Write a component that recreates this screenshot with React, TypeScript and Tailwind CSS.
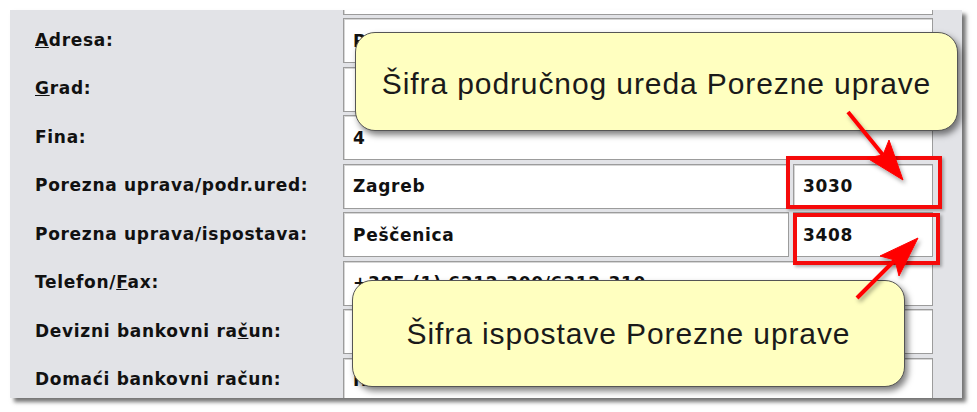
import React from 'react';

const labelFont = { fontFamily: '"DejaVu Sans", Verdana, sans-serif' };

interface Row {
  label: React.ReactNode;
  value?: string;
  code?: string;
}

const rows: Row[] = [
  { label: '', value: '' },
  { label: <><u>A</u>dresa:</>, value: 'Prilaz Gjure Deželića 12' },
  { label: <><u>G</u>rad:</>, value: '' },
  { label: 'Fina:', value: '4' },
  { label: 'Porezna uprava/podr.ured:', value: 'Zagreb', code: '3030' },
  { label: 'Porezna uprava/ispostava:', value: 'Peščenica', code: '3408' },
  { label: <>Telefon/<u>F</u>ax:</>, value: '+385 (1) 6312-300/6312-310' },
  { label: <>Devizni bankovni ra<u>č</u>un:</>, value: '' },
  { label: 'Domaći bankovni račun:', value: 'HR1723600001101234567' },
];

const Field = ({ text, w }: { text?: string; w: string }) => (
  <div className={`${w} h-full bg-white border border-[#9c9c9c] shadow-[inset_1px_1px_0_#d6d6d6] flex items-center pl-[9px] pt-[2px] text-[17px] font-bold tracking-[0.7px] text-[#111] whitespace-nowrap overflow-hidden`}>
    {text}
  </div>
);

const App: React.FC = () => {
  return (
    <div className="relative w-[977px] h-[412px] bg-white overflow-hidden pl-[10px] pt-[10px]" style={labelFont}>
      {/* Form panel */}
      <div className="w-[952px] h-[388px] bg-[#e2e3e7] overflow-hidden shadow-[4px_4px_4px_rgba(0,0,0,0.55)]">
        <div className="flex flex-col gap-[3.5px] -mt-[40.5px]">
          {rows.map((r, i) => (
            <div key={i} className="flex items-center h-[45px]">
              <div className="w-[333px] pl-[25px] text-[17px] font-bold tracking-[0.7px] text-[#111] whitespace-nowrap">
                {r.label}
              </div>
              {r.code ? (
                <div className="flex gap-[4px] h-full w-[590px]">
                  <Field text={r.value} w="w-[446px]" />
                  <Field text={r.code} w="w-[140px]" />
                </div>
              ) : (
                <Field text={r.value} w="w-[590px]" />
              )}
            </div>
          ))}
        </div>
      </div>

      {/* Red highlight boxes */}
      <div className="absolute left-[786px] top-[156px] w-[156px] h-[53px] border-4 border-[#f50a0a] shadow-[2px_2px_3px_rgba(0,0,0,0.3)]" />
      <div className="absolute left-[793px] top-[213px] w-[147px] h-[52px] border-4 border-[#f50a0a] shadow-[2px_2px_3px_rgba(0,0,0,0.3)]" />

      {/* Callouts */}
      <div
        className="absolute left-[355px] top-[32px] w-[603px] h-[99px] rounded-[20px] bg-[#ffffc0] border-[1.5px] border-[#555] shadow-[3px_4px_6px_rgba(0,0,0,0.5)] flex items-center justify-center pt-[4px] text-[30px] tracking-[0.9px] text-[#1a1a1a]"
        style={{ fontFamily: '"Liberation Sans", Arial, sans-serif' }}
      >
        Šifra područnog ureda Porezne uprave
      </div>
      <div
        className="absolute left-[352px] top-[280px] w-[553px] h-[107px] rounded-[20px] bg-[#ffffc0] border-[1.5px] border-[#555] shadow-[3px_4px_6px_rgba(0,0,0,0.5)] flex items-center justify-center text-[30px] tracking-[0.9px] text-[#1a1a1a]"
        style={{ fontFamily: '"Liberation Sans", Arial, sans-serif' }}
      >
        Šifra ispostave Porezne uprave
      </div>

      {/* Arrows */}
      <svg className="absolute left-0 top-0 pointer-events-none" width="977" height="412" viewBox="0 0 977 412">
        <defs>
          <filter id="sh" x="-20%" y="-20%" width="140%" height="140%">
            <feDropShadow dx="2" dy="3" stdDeviation="2" floodColor="#000" floodOpacity="0.35" />
          </filter>
        </defs>
        <g filter="url(#sh)" fill="#ff0000" stroke="#ff0000">
          <line x1="848" y1="112" x2="883" y2="155" strokeWidth="4" />
          <polygon points="903,180 867,158 883,155 889,140" strokeWidth="1" />
          <line x1="857" y1="298" x2="895" y2="260" strokeWidth="4" />
          <polygon points="918,238 899,276 895,260 880,256" strokeWidth="1" />
        </g>
      </svg>
    </div>
  );
};

export default App;
